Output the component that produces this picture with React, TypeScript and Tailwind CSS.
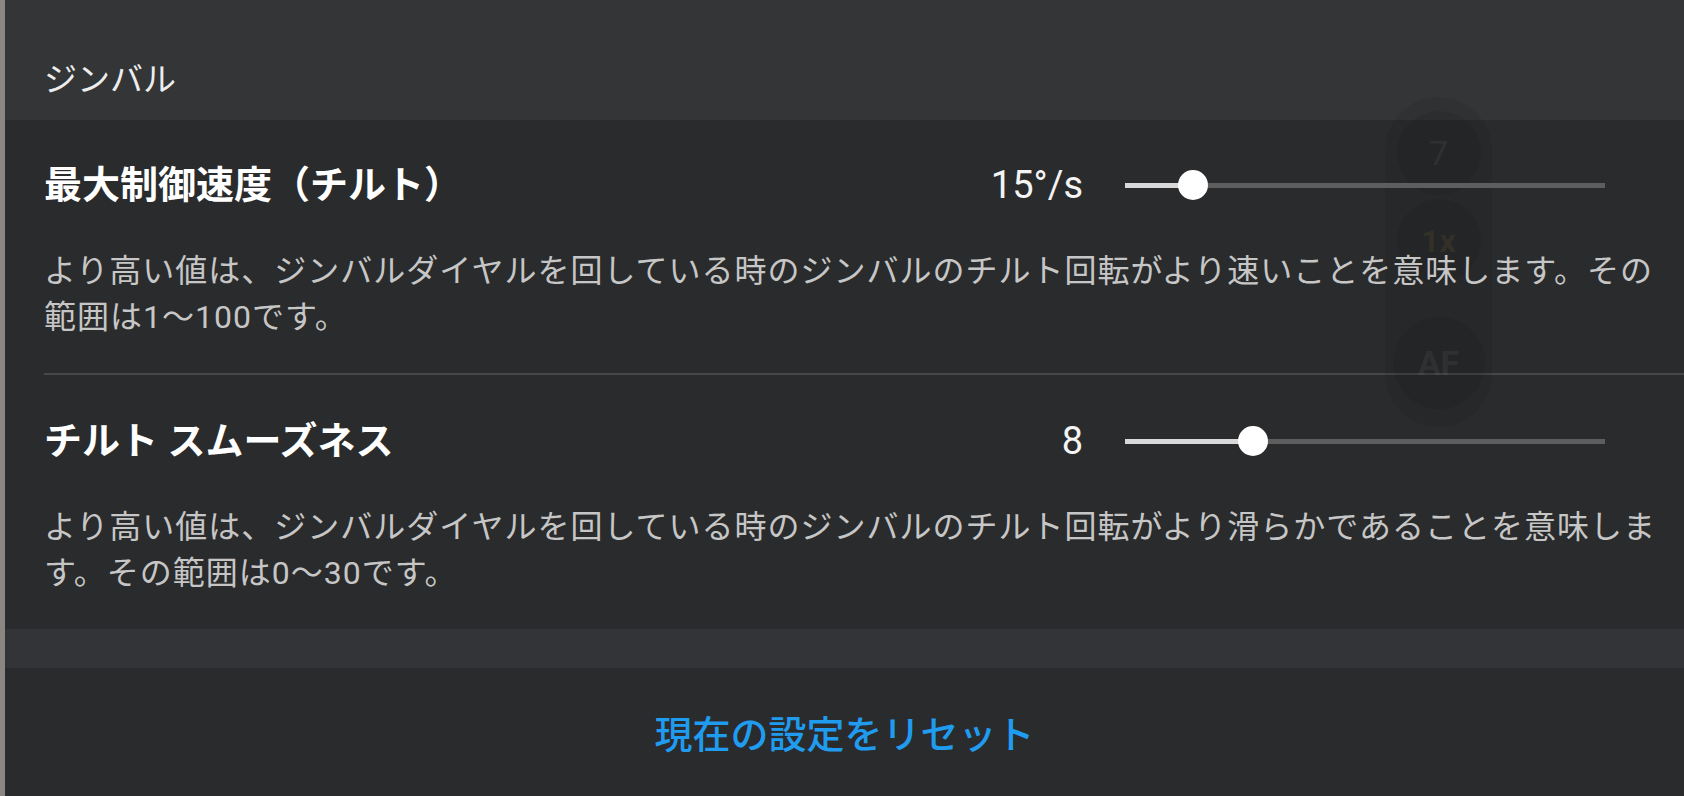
import React from "react";

type SliderProps = { pct: number };

const Slider = ({ pct }: SliderProps) => (
    <div className="relative ml-[42px] h-[30px] w-[480px] shrink-0">
        <div className="absolute left-0 right-0 top-[13px] h-[5px] bg-[#5e5e5e]" />
        <div className="absolute left-0 top-[13px] h-[5px] bg-[#d9d9d9]" style={{ width: `${pct}%` }} />
        <div
            className="absolute top-0 h-[30px] w-[30px] -translate-x-1/2 rounded-full bg-white"
            style={{ left: `${pct}%` }}
        />
    </div>
);

type ItemProps = { title: string; value: string; pct: number; desc: string; top: string };

const SettingItem = ({ title, value, pct, desc, top }: ItemProps) => (
    <div className={top}>
        <div className="relative z-10 flex h-[60px] items-center pr-[79px]">
            <h3 className="flex-1 text-[38px] font-bold leading-none text-white">{title}</h3>
            <span className="w-[160px] text-right text-[38px] leading-none text-[#f4f4f4]">{value}</span>
            <Slider pct={pct} />
        </div>
        <p className="relative z-10 mt-[33px] pr-[15px] text-[32px] leading-[46px] tracking-[1px] text-[#c6c6c6]">
            {desc}
        </p>
    </div>
);

const GhostControls = () => (
    <div className="pointer-events-none absolute left-[1380px] top-[97px] flex h-[330px] w-[107px] flex-col items-center rounded-full bg-black/[0.06] pt-[14px]">
        <div className="flex h-[84px] w-[84px] items-center justify-center rounded-full bg-black/[0.07] text-[34px] text-white/[0.05]">
            7
        </div>
        <div className="mt-[4px] flex h-[84px] w-[84px] items-center justify-center rounded-full bg-black/[0.07] text-[32px] font-bold text-[#c9a43a]/[0.10]">
            1x
        </div>
        <div className="mt-[34px] flex h-[92px] w-[92px] items-center justify-center rounded-full bg-black/[0.07] text-[34px] font-bold text-white/[0.05]">
            AF
        </div>
    </div>
);

const App = () => {
    return (
        <div className="flex h-[796px] w-full overflow-hidden bg-[#2a2b2c] font-['Roboto','Noto_Sans_CJK_JP',sans-serif]">
            <div className="w-[5px] shrink-0 bg-[#8a8682]" />
            <div className="relative flex flex-1 flex-col">
                <div className="h-[120px] bg-[#343537] pl-[39px] pt-[58px]">
                    <h2 className="text-[33px] leading-[44px] text-[#ededed]">ジンバル</h2>
                </div>

                <div className="h-[509px] bg-[#2a2b2c] pl-[39px]">
                    <SettingItem
                        top="pt-[35px]"
                        title="最大制御速度（チルト）"
                        value="15°/s"
                        pct={14.1}
                        desc="より高い値は、ジンバルダイヤルを回している時のジンバルのチルト回転がより速いことを意味します。その範囲は1〜100です。"
                    />
                    <div className="mt-[33px] h-[2px] bg-[#464748]" />
                    <SettingItem
                        top="pt-[36px]"
                        title="チルト スムーズネス"
                        value="8"
                        pct={26.7}
                        desc="より高い値は、ジンバルダイヤルを回している時のジンバルのチルト回転がより滑らかであることを意味します。その範囲は0〜30です。"
                    />
                </div>

                <div className="h-[39px] bg-[#333437]" />

                <div className="flex flex-1 items-center justify-center bg-[#2a2b2c] pt-[6px]">
                    <button className="text-[38px] font-medium text-[#1f9bef]">現在の設定をリセット</button>
                </div>

                <GhostControls />
            </div>
        </div>
    );
};

export default App;
